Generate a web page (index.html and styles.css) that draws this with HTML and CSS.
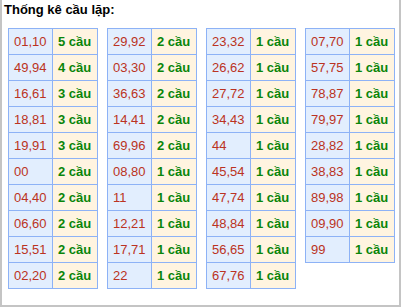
FILE: index.html
```html
<!DOCTYPE html>
<html>
<head>
<meta charset="utf-8">
<link rel="stylesheet" href="styles.css">
</head>
<body>
<div class="page">
  <div class="title">Thống kê cầu lặp:</div>
  <div class="tables">
    <table class="tk">
      <tr><td class="num">01,10</td><td class="cnt">5 cầu</td></tr>
      <tr><td class="num">49,94</td><td class="cnt">4 cầu</td></tr>
      <tr><td class="num">16,61</td><td class="cnt">3 cầu</td></tr>
      <tr><td class="num">18,81</td><td class="cnt">3 cầu</td></tr>
      <tr><td class="num">19,91</td><td class="cnt">3 cầu</td></tr>
      <tr><td class="num">00</td><td class="cnt">2 cầu</td></tr>
      <tr><td class="num">04,40</td><td class="cnt">2 cầu</td></tr>
      <tr><td class="num">06,60</td><td class="cnt">2 cầu</td></tr>
      <tr><td class="num">15,51</td><td class="cnt">2 cầu</td></tr>
      <tr><td class="num">02,20</td><td class="cnt">2 cầu</td></tr>
    </table>
    <table class="tk">
      <tr><td class="num">29,92</td><td class="cnt">2 cầu</td></tr>
      <tr><td class="num">03,30</td><td class="cnt">2 cầu</td></tr>
      <tr><td class="num">36,63</td><td class="cnt">2 cầu</td></tr>
      <tr><td class="num">14,41</td><td class="cnt">2 cầu</td></tr>
      <tr><td class="num">69,96</td><td class="cnt">2 cầu</td></tr>
      <tr><td class="num">08,80</td><td class="cnt">1 cầu</td></tr>
      <tr><td class="num">11</td><td class="cnt">1 cầu</td></tr>
      <tr><td class="num">12,21</td><td class="cnt">1 cầu</td></tr>
      <tr><td class="num">17,71</td><td class="cnt">1 cầu</td></tr>
      <tr><td class="num">22</td><td class="cnt">1 cầu</td></tr>
    </table>
    <table class="tk">
      <tr><td class="num">23,32</td><td class="cnt">1 cầu</td></tr>
      <tr><td class="num">26,62</td><td class="cnt">1 cầu</td></tr>
      <tr><td class="num">27,72</td><td class="cnt">1 cầu</td></tr>
      <tr><td class="num">34,43</td><td class="cnt">1 cầu</td></tr>
      <tr><td class="num">44</td><td class="cnt">1 cầu</td></tr>
      <tr><td class="num">45,54</td><td class="cnt">1 cầu</td></tr>
      <tr><td class="num">47,74</td><td class="cnt">1 cầu</td></tr>
      <tr><td class="num">48,84</td><td class="cnt">1 cầu</td></tr>
      <tr><td class="num">56,65</td><td class="cnt">1 cầu</td></tr>
      <tr><td class="num">67,76</td><td class="cnt">1 cầu</td></tr>
    </table>
    <table class="tk">
      <tr><td class="num">07,70</td><td class="cnt">1 cầu</td></tr>
      <tr><td class="num">57,75</td><td class="cnt">1 cầu</td></tr>
      <tr><td class="num">78,87</td><td class="cnt">1 cầu</td></tr>
      <tr><td class="num">79,97</td><td class="cnt">1 cầu</td></tr>
      <tr><td class="num">28,82</td><td class="cnt">1 cầu</td></tr>
      <tr><td class="num">38,83</td><td class="cnt">1 cầu</td></tr>
      <tr><td class="num">89,98</td><td class="cnt">1 cầu</td></tr>
      <tr><td class="num">09,90</td><td class="cnt">1 cầu</td></tr>
      <tr><td class="num">99</td><td class="cnt">1 cầu</td></tr>
    </table>
  </div>
</div>
</body>
</html>
```
FILE: styles.css
```css
html, body {
  margin: 0;
  padding: 0;
  background: #fff;
}
.page {
  width: 401px;
  height: 307px;
  box-sizing: border-box;
  border: 2px solid #c4c4c4;
  border-top: none;
  font-family: "Liberation Sans", Arial, sans-serif;
  font-size: 13px;
}
.title {
  font-weight: bold;
  color: #000;
  line-height: 16px;
  padding: 2px 0 0 2px;
  height: 16px;
}
.tables {
  display: flex;
  align-items: flex-start;
  gap: 9px;
  padding-left: 6px;
  margin-top: 10px;
}
.tk {
  border-collapse: collapse;
  table-layout: fixed;
  width: 90px;
}
.tk td {
  border: 1px solid #8db2f6;
  line-height: 25px;
  padding: 0 0 0 5px;
  white-space: nowrap;
  vertical-align: middle;
}
.num {
  width: 38px;
  background: #e2eefe;
  color: #bb3322;
}
.cnt {
  background: #fff4e0;
  color: #0a850a;
  font-weight: bold;
}
```
